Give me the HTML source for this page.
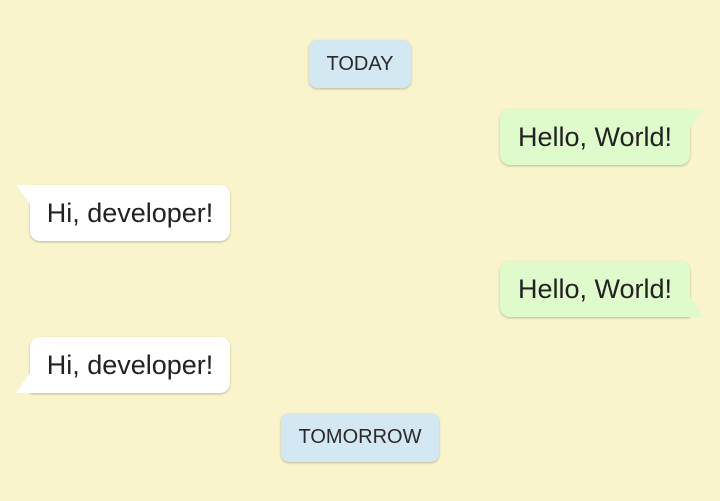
<!DOCTYPE html>
<html><head><style>
body{margin:0;width:720px;height:501px;background:#f9f4cb;position:relative;overflow:hidden;font-family:"Liberation Sans",Roboto,sans-serif;color:#222;}
.chip{position:absolute;background:#d4e8f3;border-radius:8px;box-shadow:0 1px 2px rgba(0,0,0,.25);font-size:20px;display:flex;align-items:center;justify-content:center;color:#2a2a2a}
.b{position:absolute;height:56px;font-size:27px;display:flex;align-items:center;justify-content:center;box-shadow:0 1px 2px rgba(0,0,0,.25)}
.g{background:#dffbcb;left:500px;width:190px}
.w{background:#fff;left:30px;width:200px}
svg{position:absolute}
</style></head><body>
<div class="chip" style="left:309px;top:40px;width:102px;height:48px">TODAY</div>
<div class="chip" style="left:281px;top:413px;width:158px;height:49px">TOMORROW</div>

<div class="b g" style="top:109px;border-radius:0 0 10px 10px;border-top-left-radius:10px">Hello, World!</div>
<svg style="left:689px;top:109px" width="16" height="20"><polygon points="0,0 15,0 1,19 0,19" fill="#dffbcb"/></svg>

<div class="b w" style="top:185px;border-radius:0 10px 10px 10px">Hi, developer!</div>
<svg style="left:15px;top:185px" width="16" height="20"><polygon points="1,0 16,0 16,19 15,19" fill="#fff"/></svg>

<div class="b g" style="top:261px;border-radius:10px 10px 0 10px">Hello, World!</div>
<svg style="left:689px;top:297px" width="16" height="20"><polygon points="0,0 1,0 15,20 0,20" fill="#dffbcb"/></svg>

<div class="b w" style="top:337px;border-radius:10px 10px 10px 0">Hi, developer!</div>
<svg style="left:15px;top:373px" width="16" height="20"><polygon points="15,0 16,0 16,20 1,20" fill="#fff"/></svg>
</body></html>
